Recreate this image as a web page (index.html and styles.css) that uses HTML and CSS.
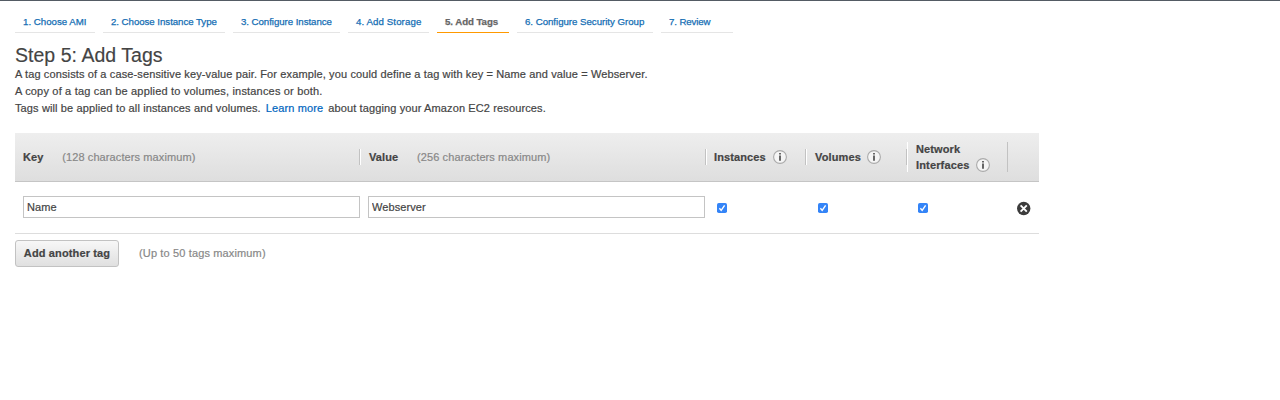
FILE: index.html
```html
<!DOCTYPE html>
<html lang="en">
<head>
<meta charset="utf-8">
<title>Step 5: Add Tags</title>
<link rel="stylesheet" href="styles.css">
</head>
<body>
<nav class="steps">
<a class="step s1">1. Choose AMI</a>
<a class="step s2">2. Choose Instance Type</a>
<a class="step s3">3. Configure Instance</a>
<a class="step s4">4. Add Storage</a>
<a class="step s5 active">5. Add Tags</a>
<a class="step s6">6. Configure Security Group</a>
<a class="step s7">7. Review</a>
</nav>
<main class="content">
<h1 class="title">Step 5: Add Tags</h1>
<div class="intro">
<p class="line">A tag consists of a case-sensitive key-value pair. For example, you could define a tag with key = Name and value = Webserver.</p>
<p class="line copy">A copy of a tag can be applied to volumes, instances or both.</p>
<p class="line">Tags will be applied to all instances and volumes. <a class="link">Learn more</a> <span class="about">about tagging your Amazon EC2 resources.</span></p>
</div>
<section class="table">
<div class="grid head">
<div class="cell"><b>Key</b><span class="hint">(128 characters maximum)</span></div>
<div class="cell sep value"><b>Value</b><span class="hint">(256 characters maximum)</span></div>
<div class="cell sep"><b>Instances</b><svg class="info" viewBox="0 0 14 14"><circle cx="7" cy="7" r="6.4"/><path d="M7 5.4v5.4M7 3v1.5"/></svg></div>
<div class="cell sep volumes"><b>Volumes</b><svg class="info" viewBox="0 0 14 14"><circle cx="7" cy="7" r="6.4"/><path d="M7 5.4v5.4M7 3v1.5"/></svg></div>
<div class="cell sep tall"><div class="network"><b>Network</b><div class="second"><b>Interfaces</b><svg class="info" viewBox="0 0 14 14"><circle cx="7" cy="7" r="6.4"/><path d="M7 5.4v5.4M7 3v1.5"/></svg></div></div></div>
<div class="cell end"></div>
</div>
<div class="grid row">
<div class="field"><input class="input" value="Name"></div>
<div class="field second-field"><input class="input" value="Webserver"></div>
<div class="check"><svg class="box" viewBox="0 0 10 10"><rect width="10" height="10" rx="1.8"/><path d="M2.4 5.3l1.8 2.1 3.4-5"/></svg></div>
<div class="check volume-check"><svg class="box" viewBox="0 0 10 10"><rect width="10" height="10" rx="1.8"/><path d="M2.4 5.3l1.8 2.1 3.4-5"/></svg></div>
<div class="check"><svg class="box" viewBox="0 0 10 10"><rect width="10" height="10" rx="1.8"/><path d="M2.4 5.3l1.8 2.1 3.4-5"/></svg></div>
<div class="delete"><svg class="remove" viewBox="0 0 14 14"><circle cx="6.7" cy="6.5" r="6.7"/><path d="M3.6 3.4l6.2 6.2M9.8 3.4l-6.2 6.2"/></svg></div>
</div>
</section>
<div class="footer"><button class="button">Add another tag</button><span class="limit">(Up to 50 tags maximum)</span></div>
</main>
</body>
</html>
```
FILE: styles.css
```css
* { box-sizing: border-box; }
body {
  margin: 0;
  min-height: 400px;
  border-top: 1px solid #545b64;
  background: #fff;
  color: #444;
  font: 11px/17px "Liberation Sans", Arial, sans-serif;
}
.steps { display: flex; gap: 8px; padding: 10px 15px 0; }
.step {
  height: 22px;
  padding-left: 8px;
  border-bottom: 1px solid #e5e5e5;
  color: #146eb4;
  font-size: 9.7px;
  line-height: 21px;
  white-space: nowrap;
  letter-spacing: -0.06px;
  -webkit-text-stroke: 0.25px;
}
.s1 { width: 80px; letter-spacing: 0; }
.s2 { width: 122px; letter-spacing: -0.05px; }
.s3 { width: 107px; }
.s4 { width: 81px; letter-spacing: 0.09px; }
.s5 { width: 72px; letter-spacing: -0.07px; }
.s6 { width: 136px; letter-spacing: -0.03px; }
.s7 { width: 72px; letter-spacing: -0.12px; }
.active { border-color: #f90; color: #666; font-weight: bold; }
.content { width: 1039px; padding: 11px 0 0 15px; }
.title { margin: 0; font-size: 19.5px; line-height: 23px; height: 22px; font-weight: normal; letter-spacing: 0.03px; -webkit-text-stroke: 0.15px; }
.intro { height: 67px; }
.line { margin: 0; white-space: nowrap; letter-spacing: 0.122px; -webkit-text-stroke: 0.2px; }
.copy { letter-spacing: 0.18px; }
.link { margin: 0 1.8px; color: #0066c0; }
.about { letter-spacing: 0.12px; }
.grid { display: grid; grid-template-columns: 344px 346px 100px 101px 101px 32px; }
.head {
  height: 49px;
  border-bottom: 1px solid #c5c5c5;
  background: linear-gradient(#eee, #dedede);
  align-items: center;
}
.cell { display: flex; align-items: center; height: 16px; padding-left: 8px; letter-spacing: 0.12px; -webkit-text-stroke: 0.2px; }
.sep { border-left: 1px solid #c2c2c2; box-shadow: inset 1px 0 #fff; }
.value, .volumes { padding-left: 9px; }
.tall { position: relative; height: 30px; padding-left: 9px; border-left-color: transparent; }
.tall::before { content: ""; position: absolute; left: -1px; top: 7px; width: 1px; height: 16px; background: #c2c2c2; }
.network { line-height: 16px; }
.second { display: flex; align-items: center; }
.second b { letter-spacing: 0.15px; }
.end { height: 30px; border-left: 1px solid #c2c2c2; }
.hint { margin-left: 18.7px; color: #888; letter-spacing: 0.1px; }
.info { width: 14px; height: 14px; margin-left: 7px; overflow: visible; }
.volumes .info, .second .info { margin-left: 6.3px; }
.info circle { fill: #f5f5f5; stroke: #aaa; stroke-width: 1.1; }
.info path { fill: none; stroke: #444; stroke-width: 1.6; }
.row { height: 52px; padding-top: 14px; border-bottom: 1px solid #ddd; }
.field { padding-left: 8px; }
.second-field { padding-left: 9px; }
.input { display: block; width: 337px; height: 22px; padding: 0 3px; border: 1px solid #c4c4c4; color: #444; font: inherit; letter-spacing: 0.08px; -webkit-text-stroke: 0.2px; outline: 0; }
.check { padding: 7px 0 0 12px; }
.volume-check { padding-left: 13px; }
.box { display: block; width: 10px; height: 10px; }
.box rect { fill: #3484f7; }
.box path { fill: none; stroke: #fff; stroke-width: 1.4; }
.delete { padding: 6px 0 0 10px; }
.remove { display: block; width: 14px; height: 14px; overflow: visible; }
.remove circle { fill: #3c3c3c; }
.remove path { fill: none; stroke: #fff; stroke-width: 1.9; }
.footer { display: flex; align-items: center; padding-top: 6px; }
.button {
  width: 104px;
  height: 27px;
  padding: 0 0 1px;
  border: 1px solid #c2c2c2;
  border-radius: 3px;
  background: linear-gradient(#f7f7f7, #e0e0e0);
  color: #444;
  font: bold 11px "Liberation Sans", Arial, sans-serif;
  letter-spacing: 0.13px;
  -webkit-text-stroke: 0.2px;
}
.limit { margin-left: 20px; color: #888; letter-spacing: 0.14px; -webkit-text-stroke: 0.2px; }
```
